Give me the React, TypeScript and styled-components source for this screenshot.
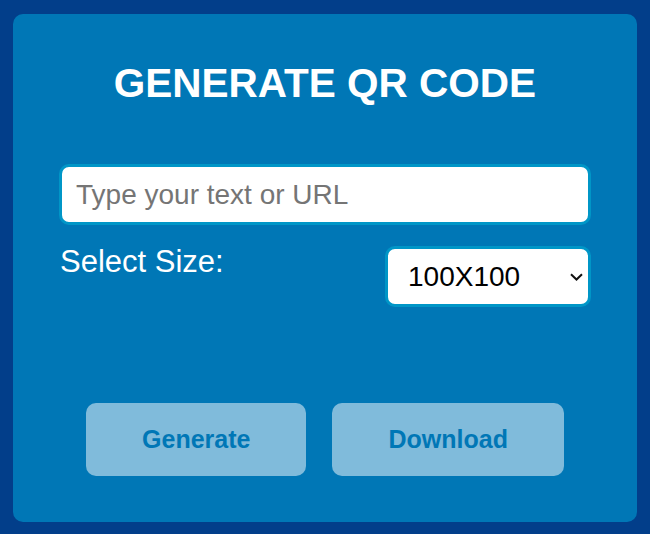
import React from "react";
import styled, { createGlobalStyle } from "styled-components";

const Global = createGlobalStyle`
  html, body { margin: 0; padding: 0; }
  body {
    background: #023e8a;
    font-family: "Liberation Sans", Arial, sans-serif;
    padding: 14px 13px 12px;
  }
  * { box-sizing: border-box; }
`;

const Card = styled.div`
  background: #0077b6;
  border-radius: 10px;
  padding: 46px;
  display: flex;
  flex-direction: column;
`;

const Title = styled.h1`
  margin: 0 0 58px;
  color: #fff;
  font-size: 40.5px;
  font-weight: 700;
  line-height: 46px;
  text-align: center;
`;

const TextInput = styled.input`
  width: 100%;
  height: 61px;
  border: 3px solid #0096c7;
  border-radius: 10px;
  padding: 0 14px;
  font-family: "Liberation Sans", Arial, sans-serif;
  font-size: 28px;
  color: #000;
  background: #fff;
  outline: none;
  &::placeholder { color: #757575; }
`;

const SizeRow = styled.div`
  display: flex;
  justify-content: space-between;
  align-items: flex-start;
  margin-top: 19px;
`;

const Label = styled.label`
  color: #fff;
  font-size: 31px;
  line-height: 36px;
  padding-left: 1px;
`;

const SelectWrap = styled.div`
  position: relative;
  margin-top: 2px;
`;

const SizeSelect = styled.select`
  appearance: none;
  -webkit-appearance: none;
  display: block;
  width: 206px;
  height: 61px;
  border: 3px solid #0096c7;
  border-radius: 10px;
  padding: 0 30px 0 20px;
  font-family: "Liberation Sans", Arial, sans-serif;
  font-size: 28px;
  color: #000;
  background: #fff;
  outline: none;
`;

const Chevron = styled.svg`
  position: absolute;
  right: 8px;
  top: 27px;
  width: 13px;
  height: 8px;
  pointer-events: none;
`;

const Buttons = styled.div`
  display: flex;
  justify-content: center;
  gap: 26px;
  margin-top: 96px;
`;

const Button = styled.button`
  height: 73px;
  padding: 0 56px;
  border: none;
  border-radius: 10px;
  background: rgba(255, 255, 255, 0.5);
  color: #0077b6;
  font-family: "Liberation Sans", Arial, sans-serif;
  font-size: 25px;
  font-weight: 700;
  cursor: pointer;
`;

export default function App() {
  return (
    <>
      <Global />
      <Card>
        <Title>GENERATE QR CODE</Title>
        <TextInput type="text" placeholder="Type your text or URL" />
        <SizeRow>
          <Label htmlFor="size">Select Size:</Label>
          <SelectWrap>
            <SizeSelect id="size" defaultValue="100">
              <option value="100">100X100</option>
              <option value="200">200X200</option>
              <option value="300">300X300</option>
            </SizeSelect>
            <Chevron viewBox="0 0 13 8" fill="none">
              <path d="M1 1.2 L6.5 6.5 L12 1.2" stroke="#111" strokeWidth="2" />
            </Chevron>
          </SelectWrap>
        </SizeRow>
        <Buttons>
          <Button>Generate</Button>
          <Button>Download</Button>
        </Buttons>
      </Card>
    </>
  );
}
